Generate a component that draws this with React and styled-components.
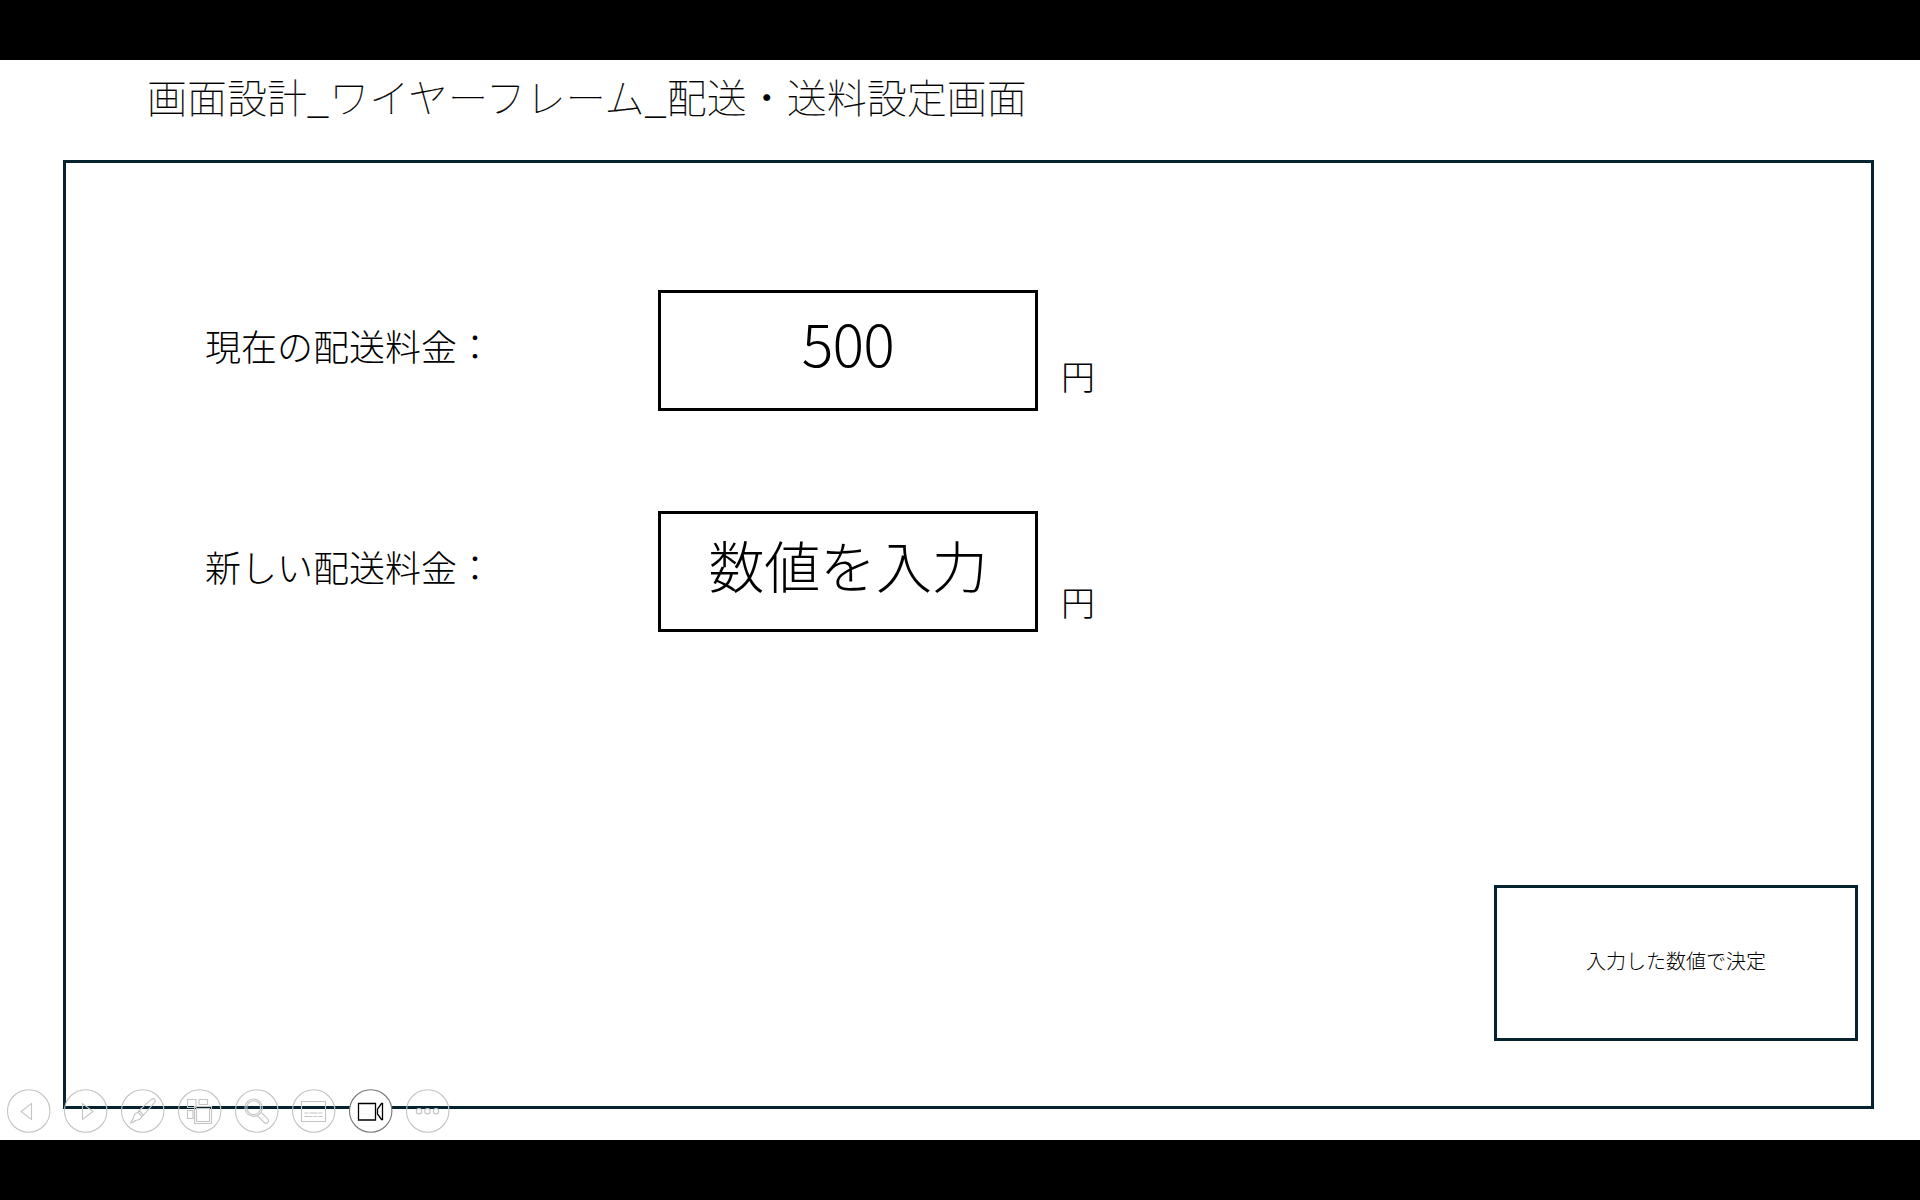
import React from 'react';
import styled, { createGlobalStyle } from 'styled-components';

const Global = createGlobalStyle`
  * { box-sizing: border-box; }
  body { margin: 0; background: #000; }
`;

const Screen = styled.main`
  width: 1920px;
  height: 1200px;
  padding: 60px 0;
  background: #000;
  overflow: hidden;
`;

const Slide = styled.section`
  position: relative;
  height: 1080px;
  padding: 0 46px 31px 63px;
  display: flex;
  flex-direction: column;
  background: #fff;
  color: #000;
  font-family: 'Noto Sans CJK JP', sans-serif;
  font-weight: 300;
`;

const Title = styled.h1`
  margin: 0;
  height: 100px;
  padding: 6px 0 0 84px;
  font-size: 40px;
  line-height: 60px;
  font-weight: 100;
  letter-spacing: 0.03px;
  white-space: nowrap;
  -webkit-text-stroke: 0.15px #000;
`;

const Frame = styled.div`
  flex: 1;
  display: flex;
  flex-direction: column;
  justify-content: space-between;
  padding: 127px 13px 65px 139px;
  border: 3px solid #04232f;
`;

const Fields = styled.div`
  display: flex;
  flex-direction: column;
  gap: 100px;
`;

const Field = styled.div`
  display: grid;
  grid-template-columns: 453px 380px auto;
  height: 121px;
`;

const Label = styled.span`
  padding-top: 28px;
  font-size: 36px;
  line-height: 54px;
`;

const ValueBox = styled.div`
  padding-top: ${(p) => p.$top}px;
  border: 3px solid #000;
  text-align: center;
  font-size: ${(p) => p.$size}px;
  letter-spacing: ${(p) => p.$spacing || 0}px;
  line-height: 84px;
`;

const Unit = styled.span`
  padding: ${(p) => p.$top}px 0 0 23px;
  font-size: 34px;
  line-height: 54px;
`;

const Submit = styled.button`
  align-self: flex-end;
  width: 364px;
  height: 156px;
  padding: 0 0 4px;
  border: 3px solid #04232f;
  background: #fff;
  color: #000;
  font: 300 20px/30px 'Noto Sans CJK JP', sans-serif;
`;

const Controls = styled.nav`
  position: absolute;
  left: 7px;
  bottom: 7px;
  display: flex;
  gap: 13px;
`;

const Control = styled.button`
  width: 44px;
  height: 44px;
  padding: 0;
  border: 0;
  background: none;
  color: ${(p) => (p.$active ? '#000' : '#c4c4c4')};

  svg { display: block; }
  .ring {
    fill: ${(p) => (p.$active ? '#fff' : 'none')};
    stroke: ${(p) => (p.$active ? '#777' : '#c4c4c4')};
  }
`;

const icons = {
  prev: <path d="M24.500 14.500v16L14 22.500z" />,
  next: <path d="M18.500 14.500v16L29 22.500z" />,
  pen: <path d="M30.500 10.200q2-1.200 3.200.2 1.200 1.400-.2 3.200L22.500 26l-4.500-4.500zM18 21.500l4.500 4.500-1.500 1.500-4-4zM17 23.500q-4 .5-4.500 5.500-1 2-3 5 3-.5 5-2.500 5-.5 6.500-4" />,
  slides: <path d="M9.500 10.500h8.500v8H9.500zM21 10.500h8.500v5H21zM9.500 21.500h5.500v8H9.500zM16.500 17.500h17v17h-17zM18.500 19.500h13v13h-13z" />,
  zoom: (
    <g>
      <circle cx="18.700" cy="18.700" r="8.700" />
      <circle cx="18.700" cy="18.700" r="6.900" />
      <path d="M22.500 26.700l7 7q2 1.200 3.400-.2 1.400-1.500 0-3.300l-6.500-6.700" />
    </g>
  ),
  caption: <path d="M9.500 12.500h24v20h-24zM12.500 24h4m1 0h8m1 0h4M12.500 27.500h8m1 0h4m1 0h4" />,
  camera: <path strokeWidth="1.3" d="M9.500 14.500h17v16.500h-17zM33.500 14.500v16h-1l-4-5.500v-5l4-5.500z" />,
  more: (
    <g>
      <circle cx="13" cy="22.200" r="2.700" />
      <circle cx="21.500" cy="22.200" r="2.700" />
      <circle cx="30" cy="22.200" r="2.700" />
    </g>
  ),
};

const labels = {
  prev: '前へ', next: '次へ', pen: 'ペン', slides: 'スライド一覧',
  zoom: '拡大', caption: '字幕', camera: 'カメラ', more: 'その他',
};

export default function App() {
  return (
    <>
      <Global />
      <Screen>
        <Slide>
          <Title>画面設計_ワイヤーフレーム_配送・送料設定画面</Title>
          <Frame>
            <Fields>
              <Field>
                <Label>現在の配送料金：</Label>
                <ValueBox $size={59} $top={7} $spacing={-0.8}>500</ValueBox>
                <Unit $top={59}>円</Unit>
              </Field>
              <Field>
                <Label>新しい配送料金：</Label>
                <ValueBox $size={56} $top={8} $spacing={-0.2}>数値を入力</ValueBox>
                <Unit $top={64}>円</Unit>
              </Field>
            </Fields>
            <Submit>入力した数値で決定</Submit>
          </Frame>
          <Controls>
            {Object.keys(icons).map((name) => (
              <Control key={name} $active={name === 'camera'} aria-label={labels[name]}>
                <svg width="44" height="44" viewBox="0 0 44 44" fill="none" stroke="currentColor" strokeWidth="1.1">
                  <circle className="ring" cx="21.700" cy="22" r="21.200" />
                  {icons[name]}
                </svg>
              </Control>
            ))}
          </Controls>
        </Slide>
      </Screen>
    </>
  );
}
